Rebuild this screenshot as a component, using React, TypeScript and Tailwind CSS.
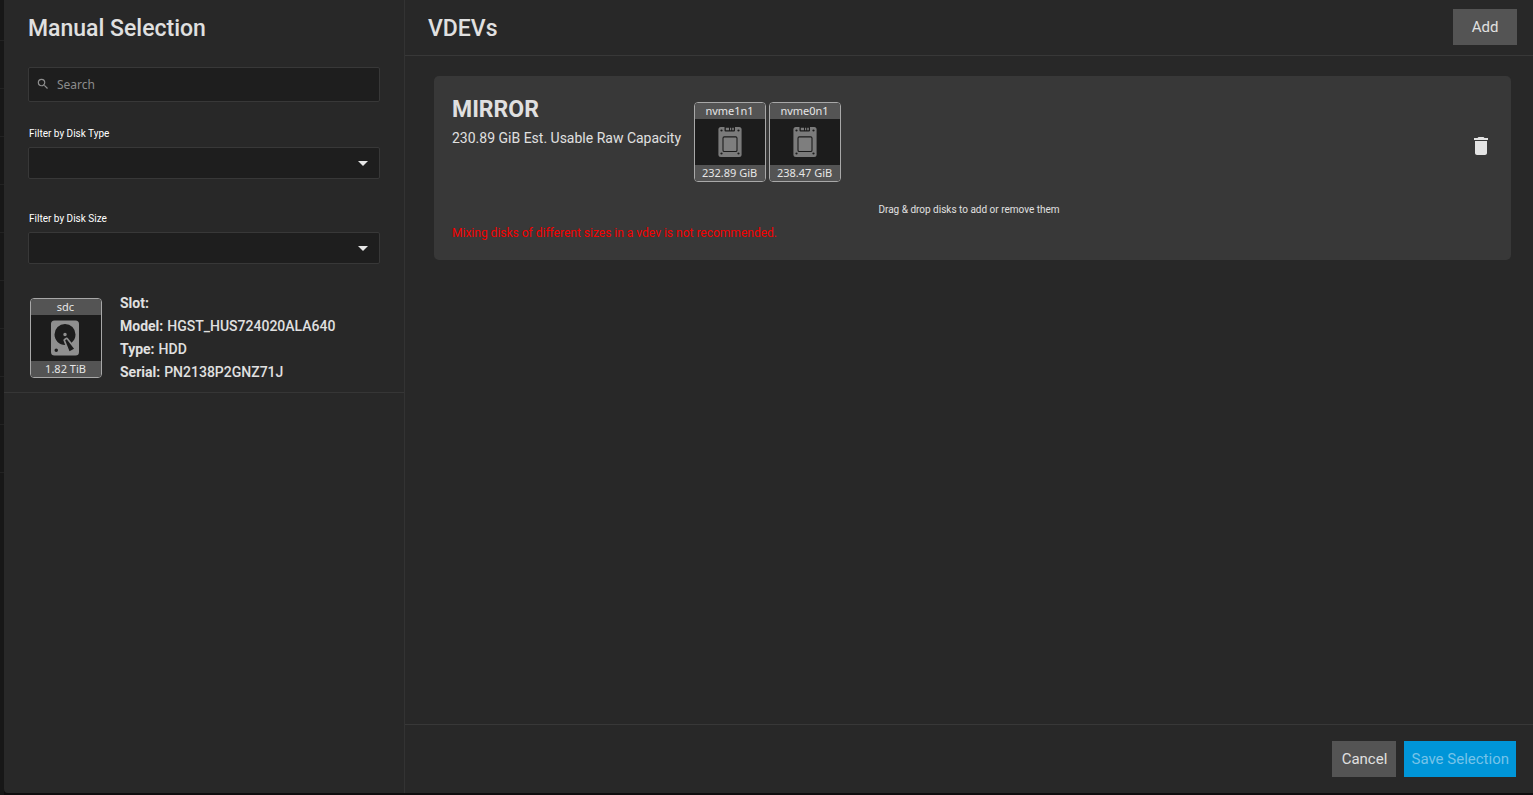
import { useState } from "react";
import type { ReactNode } from "react";

type Disk = { name: string; size: string; kind: "hdd" | "ssd" };

const sdc: Disk = { name: "sdc", size: "1.82 TiB", kind: "hdd" };
const mirror: Disk[] = [
  { name: "nvme1n1", size: "232.89 GiB", kind: "ssd" },
  { name: "nvme0n1", size: "238.47 GiB", kind: "ssd" },
];
const details = [
  ["Slot:", ""],
  ["Model:", "HGST_HUS724020ALA640"],
  ["Type:", "HDD"],
  ["Serial:", "PN2138P2GNZ71J"],
];

function HddIcon() {
  return (
    <svg viewBox="0 0 24 24" className="mr-0.5 size-[42px] fill-[#8f8f8f]" aria-hidden="true">
      <path d="M6,2H18A2,2 0 0,1 20,4V20A2,2 0 0,1 18,22H6A2,2 0 0,1 4,20V4A2,2 0 0,1 6,2M12,4A6,6 0 0,0 6,10C6,13.31 8.69,16 12.1,16L11.22,13.77C10.95,13.29 11.11,12.68 11.59,12.4L12.45,11.9C12.93,11.63 13.54,11.79 13.82,12.27L15.74,14.69C17.12,13.59 18,11.9 18,10A6,6 0 0,0 12,4M12,9A1,1 0 0,1 13,10A1,1 0 0,1 12,11A1,1 0 0,1 11,10A1,1 0 0,1 12,9M7,18A1,1 0 0,0 6,19A1,1 0 0,0 7,20A1,1 0 0,0 8,19A1,1 0 0,0 7,18M12.09,13.27L14.58,19.58L17.17,18.08L12.95,12.77L12.09,13.27Z" />
    </svg>
  );
}

function SsdIcon() {
  return (
    <svg viewBox="0 0 24 30" className="h-[30px] w-6" aria-hidden="true">
      <rect x="0.4" y="0" width="23.2" height="30" rx="2.5" fill="#7b7b7b" />
      <path d="M6.5 0V3.4Q6.5 4.5 7.6 4.5H15.9Q17 4.5 17 3.4V0Z" fill="#1c1c1c" />
      <path d="M7.8 0.8H11V3.2H7.8ZM12 0.8H13.2V3.2H12ZM14.2 0.8H15.8V3.2H14.2Z" fill="#7b7b7b" />
      <rect x="5" y="9.9" width="14" height="14.6" rx="1.3" fill="#7e7e7e" stroke="#1c1c1c" strokeWidth="1.1" />
      <g fill="#1c1c1c">
        <circle cx="3.5" cy="3.5" r="1.1" />
        <circle cx="20.5" cy="3.5" r="1.1" />
        <circle cx="3.5" cy="26.5" r="1.1" />
        <circle cx="20.5" cy="26.5" r="1.1" />
      </g>
    </svg>
  );
}

function DiskTile({ disk }: { disk: Disk }) {
  return (
    <div className="flex h-20 w-[72px] shrink-0 cursor-grab flex-col overflow-hidden rounded border border-[#a8a8a8] bg-[#1c1c1c] text-center font-['Noto_Sans',sans-serif] text-[11px] leading-4 text-[#e6e6e6]">
      <div className="h-4 bg-[#545454] pr-px">{disk.name}</div>
      <div className="flex min-h-0 flex-1 items-center justify-center pb-px">
        {disk.kind === "hdd" ? <HddIcon /> : <SsdIcon />}
      </div>
      <div className="h-4 bg-[#545454] pr-px">{disk.size}</div>
    </div>
  );
}

function FilterSelect({ id, label }: { id: string; label: string }) {
  return (
    <div>
      <label htmlFor={id} className="block px-px text-[10px] leading-4 text-white">
        {label}
      </label>
      <div className="relative mt-[5px]">
        <select id={id} className="block h-8 w-full appearance-none rounded-xs border border-[#383838] bg-[#1e1e1e] px-2 text-sm text-[#e0e0e0]">
          <option value=""></option>
        </select>
        <svg viewBox="0 0 10 5" className="pointer-events-none absolute top-3.5 right-3 h-[5px] w-2.5 fill-[#e6e6e6]" aria-hidden="true">
          <path d="M0 0H10L5 5Z" />
        </svg>
      </div>
    </div>
  );
}

function Button({ className, disabled, children }: { className: string; disabled?: boolean; children: ReactNode }) {
  return (
    <button type="button" disabled={disabled} className={`h-9 min-w-16 px-[7px] text-[15px] ${className}`}>
      {children}
    </button>
  );
}

export default function App() {
  const [query, setQuery] = useState("");
  return (
    <div className="flex min-h-screen bg-[#0f0d0e] font-[Roboto,sans-serif] text-[#e0e0e0]">
      <div className="w-1 shrink-0 bg-[#171717] pt-10" aria-hidden="true">
        <div className="h-px bg-[#222222]" />
        {Array.from({ length: 9 }, (_, i) => (
          <div key={i} className="h-12 border-b border-[#222222]" />
        ))}
      </div>
      <main className="mb-0.5 flex min-w-0 flex-1 rounded-bl bg-[#282828]">
        <aside className="w-[401px] shrink-0 border-r border-[#333333]">
          <div className="px-6 pt-[11px]">
            <h2 className="text-[23px] leading-9 font-medium">Manual Selection</h2>
            <div className="relative mt-5">
              <svg viewBox="0 0 24 24" className="pointer-events-none absolute top-2.5 left-2 size-3.5 fill-[#8f8f8f]" aria-hidden="true">
                <path d="M15.5 14h-.79l-.28-.27A6.47 6.47 0 0 0 16 9.5 6.5 6.5 0 1 0 9.5 16c1.61 0 3.09-.59 4.23-1.57l.27.28v.79l5 4.99L20.49 19zm-6 0C7.01 14 5 11.99 5 9.5S7.01 5 9.5 5 14 7.01 14 9.5 11.99 14 9.5 14" />
              </svg>
              <input
                type="search"
                aria-label="Search"
                placeholder="Search"
                value={query}
                onChange={(e) => setQuery(e.target.value)}
                className="block h-[35px] w-full rounded-xs border border-[#383838] bg-[#1e1e1e] pr-2 pl-7 font-['Noto_Sans',sans-serif] text-xs placeholder:text-[#8c8c8c]"
              />
            </div>
            <div className="mt-6 flex flex-col gap-8">
              <FilterSelect id="disk-type" label="Filter by Disk Type" />
              <FilterSelect id="disk-size" label="Filter by Disk Size" />
            </div>
          </div>
          <div className="mt-7 flex gap-[18px] border-b border-[#363636] pb-2 pl-[26px]">
            <div className="pt-1.5">
              <DiskTile disk={sdc} />
            </div>
            <dl className="text-sm leading-[23px] font-medium">
              {details.map(([term, value]) => (
                <div key={term} className="flex gap-1">
                  <dt className="font-bold">{term}</dt>
                  <dd>{value}</dd>
                </div>
              ))}
            </dl>
          </div>
        </aside>
        <section className="flex min-w-0 flex-1 flex-col">
          <header className="flex items-start justify-between border-b border-[#383838] pt-[9px] pr-4 pb-2 pl-[23px]">
            <h2 className="pt-0.5 text-[23px] leading-9 font-medium">VDEVs</h2>
            <Button className="bg-[#545454]">Add</Button>
          </header>
          <div className="flex-1 pt-5 pr-[22px] pl-[29px]">
            <article className="rounded-[5px] bg-[#383838] px-[18px] pt-4 pb-[17px]">
              <div className="flex items-start">
                <div>
                  <h3 className="text-[23px] leading-9 font-bold">MIRROR</h3>
                  <p className="text-sm leading-5">230.89 GiB Est. Usable Raw Capacity</p>
                </div>
                <div className="mt-2.5 ml-[13px] flex gap-[3px]">
                  {mirror.map((disk) => (
                    <DiskTile key={disk.name} disk={disk} />
                  ))}
                </div>
                <button type="button" aria-label="Delete VDEV" className="mt-[42px] ml-auto">
                  <svg viewBox="0 0 24 24" className="size-6 fill-[#e4e4e4]" aria-hidden="true">
                    <path d="M6 19c0 1.1.9 2 2 2h8c1.1 0 2-.9 2-2V7H6zM19 4h-3.5l-1-1h-5l-1 1H5v2h14z" />
                  </svg>
                </button>
              </div>
              <p className="mt-5 pr-[7px] text-center text-[10px] leading-4">Drag &amp; drop disks to add or remove them</p>
              <p className="mt-[5px] text-xs leading-5 text-[#f50000]">Mixing disks of different sizes in a vdev is not recommended.</p>
            </article>
          </div>
          <footer className="flex justify-end gap-2 border-t border-[#383838] p-4 pr-[17px]">
            <Button className="bg-[#545454]">Cancel</Button>
            <Button className="bg-[#0095d8] text-[#76c3e8]" disabled>
              Save Selection
            </Button>
          </footer>
        </section>
      </main>
    </div>
  );
}
